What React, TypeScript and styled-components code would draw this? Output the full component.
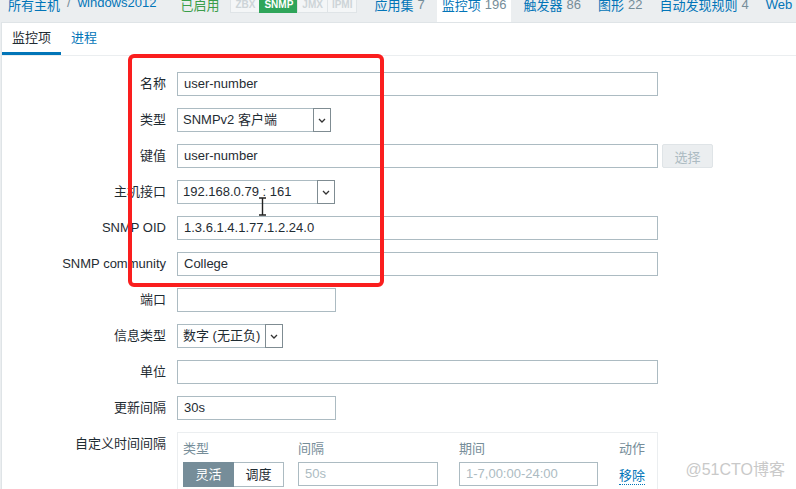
import styled, { createGlobalStyle } from "styled-components";

const colors = {
  blue: "#0275b8",
  text: "#1f2c33",
  slate: "#768d99",
  border: "#acbbc2",
  light: "#dfe4e7",
  bg: "#ebeef0",
  green: "#3a9e4a",
  badgeGreen: "#2fa55a",
  red: "#fa1e1e",
  white: "#fff",
};

const GlobalStyle = createGlobalStyle`
  html, body {
    margin: 0;
    padding: 0;
    background: ${colors.bg};
    overflow: hidden;
  }
  body {
    font-family: "Liberation Sans", Arial, "Noto Sans CJK SC", sans-serif;
    font-size: 13px;
    color: ${colors.text};
  }
  * { box-sizing: border-box; }
`;

const Page = styled.div`
  position: relative;
  height: 489px;
  overflow: hidden;
`;

/* ---------- top navigation ---------- */

const TopNav = styled.nav`
  display: flex;
  align-items: center;
  height: 36px;
  margin-top: -14px;
  padding-left: 8px;
  white-space: nowrap;
`;

const Crumbs = styled.div`
  display: flex;
  gap: 7px;
  color: ${colors.slate};

  a {
    color: ${colors.blue};
    text-decoration: none;
  }
`;

const Status = styled.span`
  color: ${colors.green};
  margin-left: 24px;
`;

const Badges = styled.div`
  display: flex;
  margin-left: 12px;
`;

const Badge = styled.span<{ $on?: boolean }>`
  display: inline-flex;
  align-items: center;
  height: 18px;
  padding: 0 4px;
  font-size: 10px;
  font-weight: bold;
  border: 1px solid ${(p) => (p.$on ? colors.badgeGreen : colors.light)};
  background: ${(p) => (p.$on ? colors.badgeGreen : "#f4f6f7")};
  color: ${(p) => (p.$on ? colors.white : "#cdd4d8")};
  margin-left: -1px;
`;

const NavTabs = styled.div`
  display: flex;
  align-self: stretch;
  margin-left: 12px;
  gap: 7px;
`;

const NavTab = styled.div<{ $active?: boolean }>`
  display: flex;
  align-items: center;
  gap: 4px;
  padding: 0 5px;
  background: ${(p) => (p.$active ? colors.white : "transparent")};
  color: ${colors.blue};

  span {
    color: ${colors.slate};
  }
`;

/* ---------- panel & tabs ---------- */

const Panel = styled.div`
  margin-left: 1px;
  background: ${colors.white};
  border-top: 1px solid ${colors.light};
  border-left: 1px solid ${colors.light};
  height: 100%;
`;

const TabBar = styled.div`
  display: flex;
  border-bottom: 1px solid ${colors.bg};
`;

const Tab = styled.div<{ $active?: boolean }>`
  height: 32px;
  padding: 0 10px;
  line-height: 29px;
  border-bottom: 3px solid ${(p) => (p.$active ? colors.blue : "transparent")};
  color: ${(p) => (p.$active ? colors.text : colors.blue)};
`;

/* ---------- form ---------- */

const Form = styled.div`
  padding-top: 16px;
`;

const Row = styled.div`
  display: flex;
  align-items: flex-start;
  gap: 11px;
  margin-bottom: 12px;
`;

const Label = styled.label`
  width: 164px;
  text-align: right;
  line-height: 24px;
  white-space: nowrap;
`;

const Field = styled.div<{ $width: number; $muted?: boolean }>`
  width: ${(p) => p.$width}px;
  height: 24px;
  border: 1px solid ${colors.border};
  padding: 0 6px;
  line-height: 22px;
  color: ${(p) => (p.$muted ? colors.border : colors.text)};
  background: ${colors.white};
`;

const Select = styled.div<{ $width: number }>`
  display: flex;
  width: ${(p) => p.$width}px;
  height: 24px;
  border: 1px solid ${colors.border};
  background: ${colors.white};
`;

const SelectText = styled.span`
  flex: 1;
  padding-left: 5px;
  line-height: 22px;
  white-space: nowrap;
`;

const Arrow = styled.span`
  display: flex;
  align-items: center;
  justify-content: center;
  width: 18px;
  margin: -1px -1px -1px 0;
  border: 1px solid #7f8c92;
  background: ${colors.white};
`;

const Button = styled.button`
  margin-left: -7px;
  width: 51px;
  height: 24px;
  border: 1px solid ${colors.light};
  border-radius: 2px;
  background: ${colors.bg};
  color: ${colors.border};
  font: inherit;
`;

const IntervalBox = styled.div`
  width: 481px;
  border: 1px solid ${colors.bg};
  padding: 7px 5px 6px;
  display: grid;
  grid-template-columns: 115px 161px 160px auto;
  row-gap: 4px;
`;

const ColHead = styled.div`
  color: ${colors.slate};
  line-height: 18px;
`;

const Segmented = styled.div`
  display: flex;
  height: 25px;
`;

const Segment = styled.div<{ $active?: boolean }>`
  width: ${(p) => (p.$active ? 51 : 50)}px;
  line-height: 23px;
  text-align: center;
  border: 1px solid ${(p) => (p.$active ? colors.slate : colors.border)};
  border-left-width: ${(p) => (p.$active ? 1 : 0)}px;
  background: ${(p) => (p.$active ? colors.slate : colors.white)};
  color: ${(p) => (p.$active ? colors.white : colors.text)};
`;

const RemoveLink = styled.a`
  align-self: center;
  justify-self: start;
  color: ${colors.blue};
  border-bottom: 1px dotted ${colors.blue};
  line-height: 16px;
  margin-top: 3px;
`;

/* ---------- overlays ---------- */

const Highlight = styled.div`
  position: absolute;
  left: 128px;
  top: 54px;
  width: 256px;
  height: 233px;
  border: 4px solid ${colors.red};
  border-radius: 6px;
  pointer-events: none;
`;

const Cursor = styled.svg`
  position: absolute;
  left: 258px;
  top: 197px;
`;

const Watermark = styled.div`
  position: absolute;
  right: 11px;
  bottom: 9px;
  font-size: 16px;
  color: #c9c9c9;
`;

const Chevron = () => (
  <svg width="8" height="5" viewBox="0 0 8 5">
    <path d="M1 1l3 3 3-3" fill="none" stroke="#333" strokeWidth="1.3" />
  </svg>
);

const App = () => {
  return (
    <Page>
      <GlobalStyle />
      <TopNav>
        <Crumbs>
          <a>所有主机</a>/<a>windows2012</a>
        </Crumbs>
        <Status>已启用</Status>
        <Badges>
          <Badge>ZBX</Badge>
          <Badge $on>SNMP</Badge>
          <Badge>JMX</Badge>
          <Badge>IPMI</Badge>
        </Badges>
        <NavTabs>
          <NavTab>
            应用集 <span>7</span>
          </NavTab>
          <NavTab $active>
            监控项 <span>196</span>
          </NavTab>
          <NavTab>
            触发器 <span>86</span>
          </NavTab>
          <NavTab>
            图形 <span>22</span>
          </NavTab>
          <NavTab>
            自动发现规则 <span>4</span>
          </NavTab>
          <NavTab>Web</NavTab>
        </NavTabs>
      </TopNav>

      <Panel>
        <TabBar>
          <Tab $active>监控项</Tab>
          <Tab>进程</Tab>
        </TabBar>

        <Form>
          <Row>
            <Label>名称</Label>
            <Field $width={481}>user-number</Field>
          </Row>
          <Row>
            <Label>类型</Label>
            <Select $width={154}>
              <SelectText>SNMPv2 客户端</SelectText>
              <Arrow>
                <Chevron />
              </Arrow>
            </Select>
          </Row>
          <Row>
            <Label>键值</Label>
            <Field $width={481}>user-number</Field>
            <Button>选择</Button>
          </Row>
          <Row>
            <Label>主机接口</Label>
            <Select $width={158}>
              <SelectText>192.168.0.79 : 161</SelectText>
              <Arrow>
                <Chevron />
              </Arrow>
            </Select>
          </Row>
          <Row>
            <Label>SNMP OID</Label>
            <Field $width={481}>1.3.6.1.4.1.77.1.2.24.0</Field>
          </Row>
          <Row>
            <Label>SNMP community</Label>
            <Field $width={481}>College</Field>
          </Row>
          <Row>
            <Label>端口</Label>
            <Field $width={159} />
          </Row>
          <Row>
            <Label>信息类型</Label>
            <Select $width={106}>
              <SelectText>数字 (无正负)</SelectText>
              <Arrow>
                <Chevron />
              </Arrow>
            </Select>
          </Row>
          <Row>
            <Label>单位</Label>
            <Field $width={481} />
          </Row>
          <Row>
            <Label>更新间隔</Label>
            <Field $width={159}>30s</Field>
          </Row>
          <Row>
            <Label>自定义时间间隔</Label>
            <IntervalBox>
              <ColHead>类型</ColHead>
              <ColHead>间隔</ColHead>
              <ColHead>期间</ColHead>
              <ColHead>动作</ColHead>
              <Segmented>
                <Segment $active>灵活</Segment>
                <Segment>调度</Segment>
              </Segmented>
              <Field $width={140} $muted>
                50s
              </Field>
              <Field $width={139} $muted>
                1-7,00:00-24:00
              </Field>
              <RemoveLink>移除</RemoveLink>
            </IntervalBox>
          </Row>
        </Form>
      </Panel>

      <Highlight />
      <Cursor width="9" height="19" viewBox="0 0 9 19">
        <path d="M1 1h7M4.5 1v17M1 18h7" fill="none" stroke="#222" strokeWidth="1.4" />
      </Cursor>
      <Watermark>@51CTO博客</Watermark>
    </Page>
  );
};

export default App;
